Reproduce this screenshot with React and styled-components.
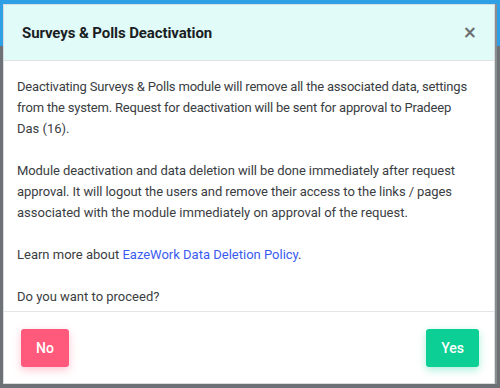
import React, { useLayoutEffect, useRef, useState } from "react";
import styled, { createGlobalStyle } from "styled-components";

const Global = createGlobalStyle`
  html, body { margin: 0; padding: 0; }
  body {
    width: 500px;
    height: 388px;
    overflow: hidden;
    font-family: Roboto, "Liberation Sans", sans-serif;
    background: linear-gradient(to bottom, #2f9fe6 0, #2f9fe6 46px, #6d7176 46px, #6d7176 100%);
  }
`;

const Page = styled.div`
  width: 500px;
  height: 388px;
  padding: 4px 0 0 3px;
  box-sizing: border-box;
`;

const Modal = styled.div`
  width: 492px;
  height: 380px;
  background: #fff;
  border: 1px solid #d9dcdf;
  box-sizing: border-box;
  box-shadow: 2px 0 0 #8a8d90;
  display: flex;
  flex-direction: column;
  overflow: hidden;
`;

const Header = styled.div`
  height: 56px;
  flex: none;
  background: #e1fbf8;
  border-bottom: 1px solid #dfe3e6;
  display: flex;
  align-items: center;
  justify-content: space-between;
  padding: 0 17px 0 18px;
  box-sizing: border-box;
`;

const Title = styled.h2`
  margin: 0;
  font-size: 15px;
  font-weight: 700;
  color: #1b1e24;
  letter-spacing: -0.1px;
`;

const Close = styled.button`
  border: 0;
  background: transparent;
  padding: 0;
  color: #6b6e70;
  font-size: 17px;
  font-weight: 700;
  line-height: 1;
  font-family: "DejaVu Sans", sans-serif;
  cursor: pointer;
`;

const Body = styled.div`
  flex: 1;
  padding: 15px 14px 0 13px;
  font-size: 13px;
  line-height: 21px;
  color: #3a3d42;
  border-bottom: 1px solid #e3e6e8;
`;

const Para = styled.p`
  margin: 0 0 21px 0;
  &:last-child { margin-bottom: 0; }
`;

const LineText = styled.span`
  display: block;
  width: max-content;
  white-space: nowrap;
`;

const Link = styled.a`
  color: #3b5bf0;
  text-decoration: none;
`;

const Footer = styled.div`
  height: 71px;
  flex: none;
  display: flex;
  align-items: center;
  justify-content: space-between;
  padding: 0 15px 0 17px;
  box-sizing: border-box;
`;

const Button = styled.button`
  height: 38px;
  border: 0;
  border-radius: 3px;
  color: #fff;
  font-family: Roboto, "Liberation Sans", sans-serif;
  font-size: 14px;
  font-weight: 500;
  padding: 0 15px;
  background: ${(p) => p.$bg};
  box-shadow: 0 3px 8px ${(p) => p.$shadow};
  cursor: pointer;
`;

// A line of body text, spaced so that it spans the width it has in the design.
function Line({ width, chars, children }) {
  const ref = useRef(null);
  const [spacing, setSpacing] = useState(0);
  useLayoutEffect(() => {
    const el = ref.current;
    if (!el) return;
    const natural = el.getBoundingClientRect().width;
    setSpacing((width - natural) / chars);
  }, [width, chars]);
  return (
    <LineText ref={ref} style={{ letterSpacing: `${spacing}px` }}>
      {children}
    </LineText>
  );
}

const L1 = "Deactivating Surveys & Polls module will remove all the associated data, settings";
const L2 = "from the system. Request for deactivation will be sent for approval to Pradeep";
const L4 = "Module deactivation and data deletion will be done immediately after request";
const L5 = "approval. It will logout the users and remove their access to the links / pages";
const L6 = "associated with the module immediately on approval of the request.";

export default function App() {
  return (
    <>
      <Global />
      <Page>
        <Modal>
          <Header>
            <Title>Surveys &amp; Polls Deactivation</Title>
            <Close aria-label="Close">×</Close>
          </Header>
          <Body>
            <Para>
              <Line width={450} chars={L1.length}>{L1}</Line>
              <Line width={434} chars={L2.length}>{L2}</Line>
              <LineText>Das (16).</LineText>
            </Para>
            <Para>
              <Line width={438} chars={L4.length}>{L4}</Line>
              <Line width={435} chars={L5.length}>{L5}</Line>
              <LineText>{L6}</LineText>
            </Para>
            <Para>
              Learn more about <Link href="#">EazeWork Data Deletion Policy</Link>.
            </Para>
            <Para>Do you want to proceed?</Para>
          </Body>
          <Footer>
            <Button $bg="#ff5a7b" $shadow="rgba(255,90,123,0.35)">No</Button>
            <Button $bg="#0bcf94" $shadow="rgba(11,207,148,0.35)">Yes</Button>
          </Footer>
        </Modal>
      </Page>
    </>
  );
}
